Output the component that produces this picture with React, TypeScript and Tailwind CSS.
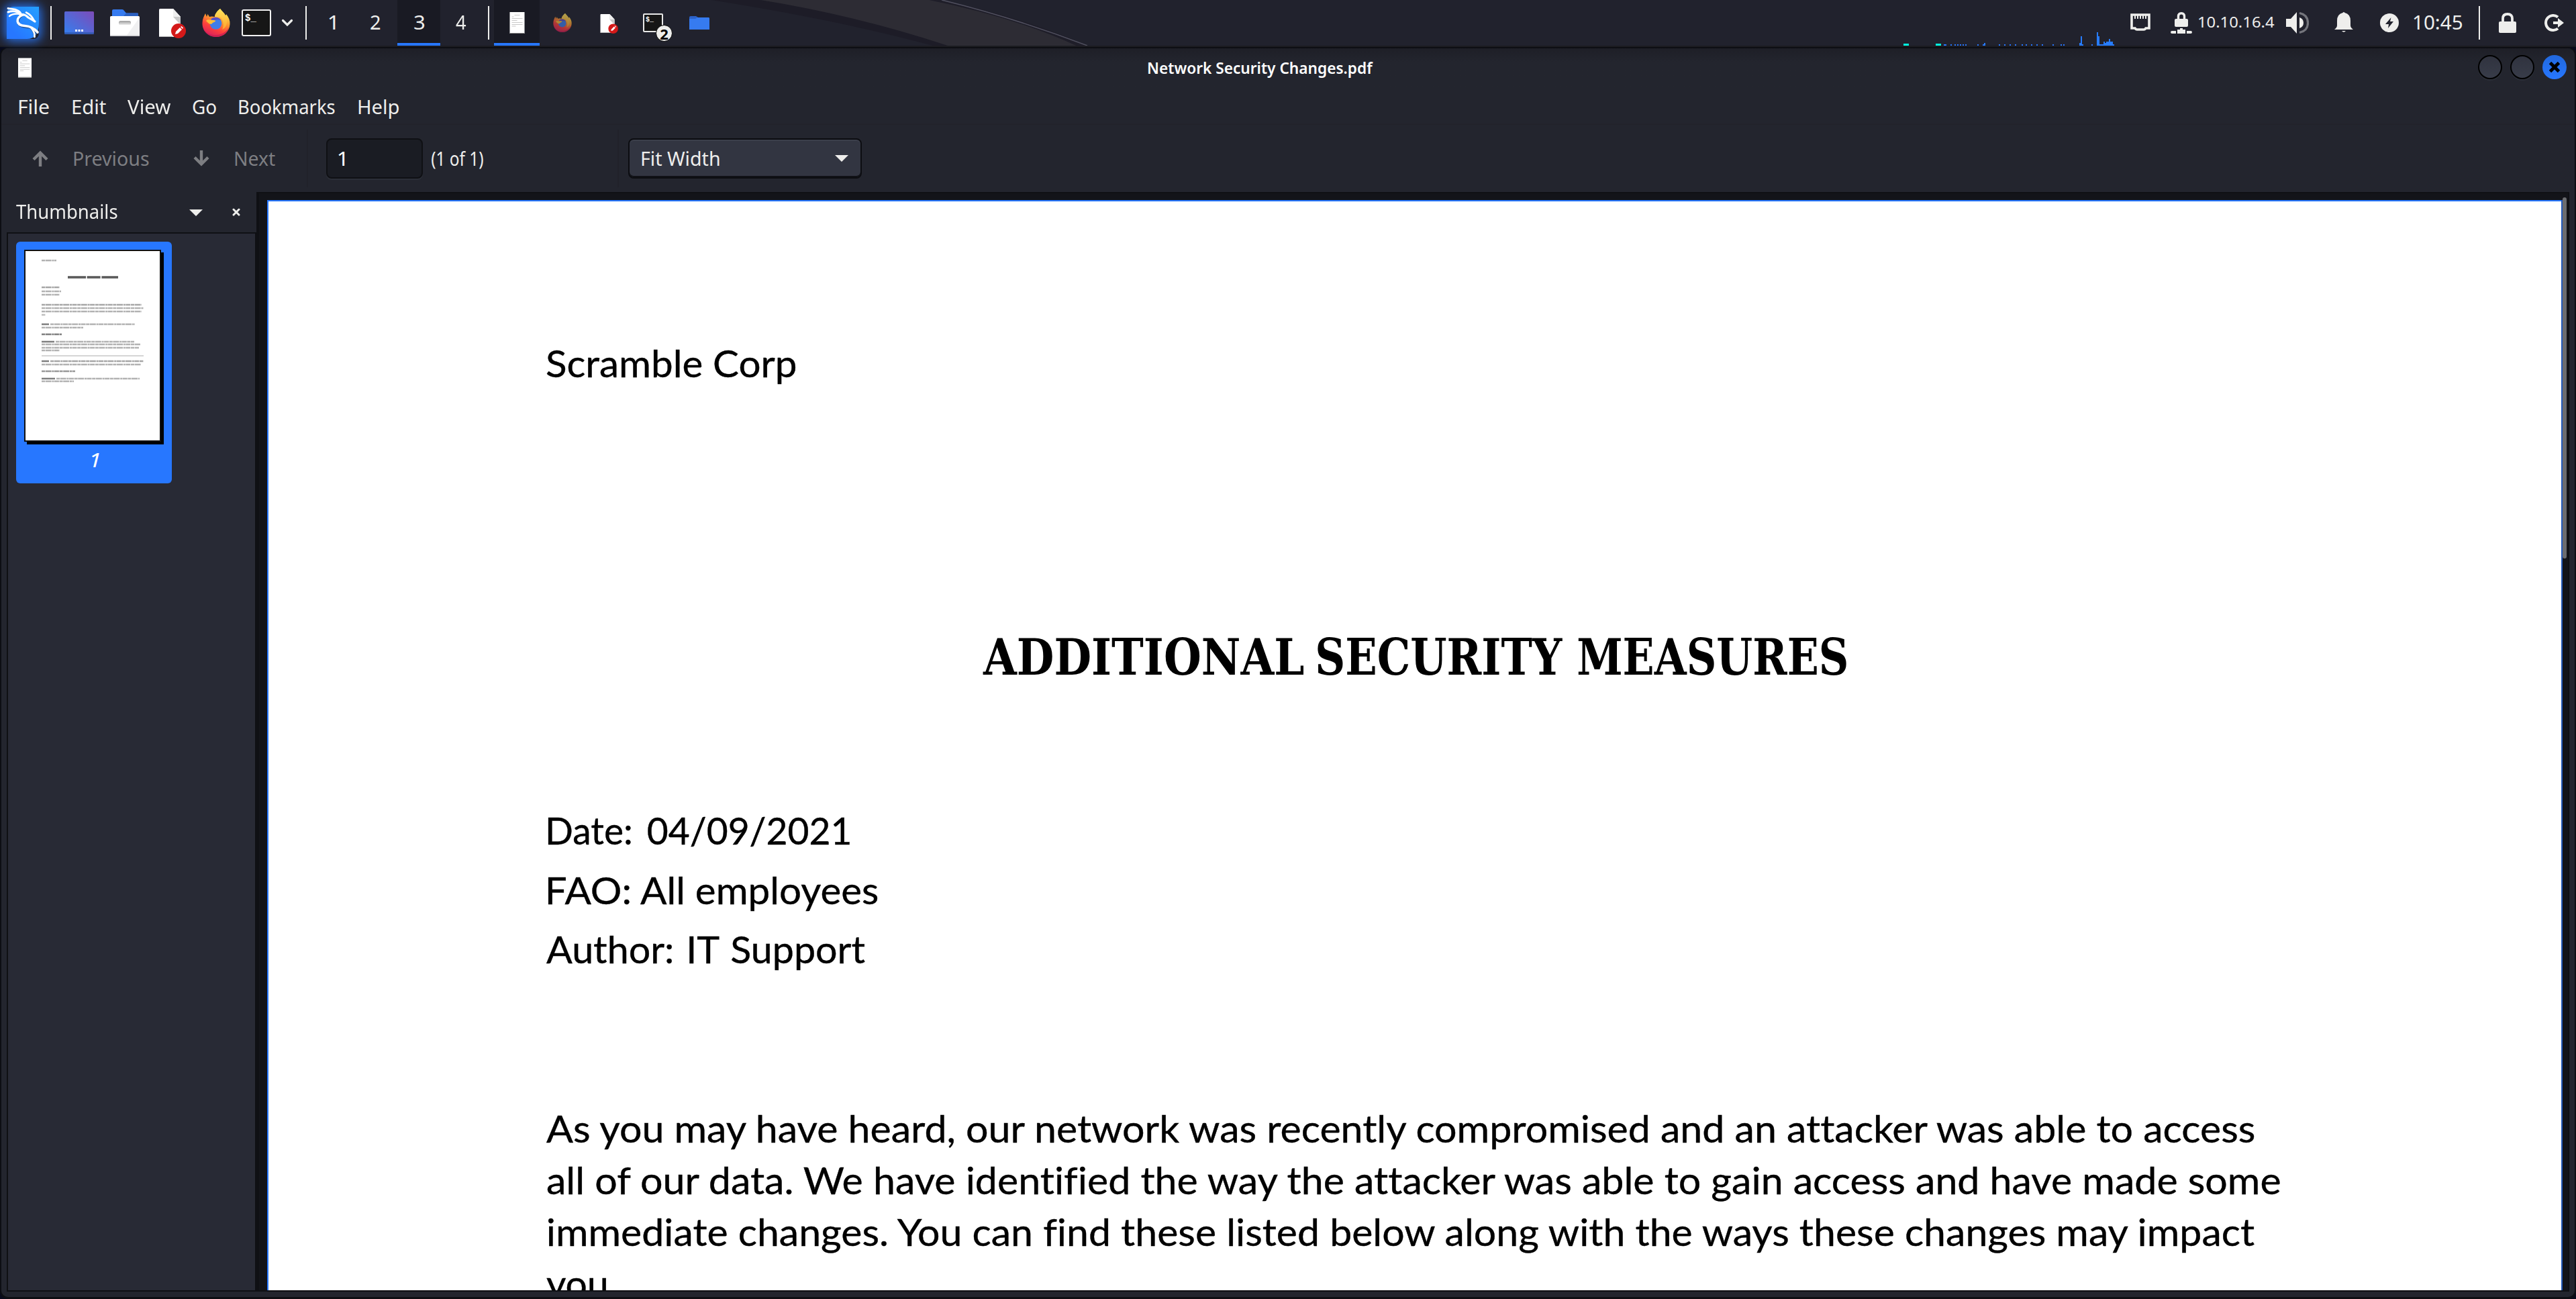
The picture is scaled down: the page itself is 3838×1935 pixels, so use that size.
import { useLayoutEffect, useRef } from "react";
import type { ReactNode } from "react";

/* One line of text whose ink is stretched to fill the width given by its class. */
function Fit({ children, className = "" }: { children: string; className?: string }) {
  const box = useRef<HTMLSpanElement>(null);
  const ink = useRef<HTMLSpanElement>(null);
  useLayoutEffect(() => {
    const outer = box.current!;
    const inner = ink.current!;
    const fit = () => {
      const cs = getComputedStyle(inner);
      const ctx = document.createElement("canvas").getContext("2d")!;
      ctx.font = `${cs.fontStyle} ${cs.fontWeight} ${cs.fontSize} ${cs.fontFamily}`;
      const m = ctx.measureText(children);
      const advance = parseFloat(cs.width);
      const natural = advance + m.actualBoundingBoxLeft + m.actualBoundingBoxRight - m.width;
      const w = outer.getBoundingClientRect().width;
      if (!(natural > 0) || !w) return;
      const s = w / natural;
      inner.style.transform = `translateX(${m.actualBoundingBoxLeft * s}px) scaleX(${s})`;
    };
    fit();
    const ro = new ResizeObserver(fit);
    ro.observe(outer);
    ro.observe(inner);
    return () => ro.disconnect();
  }, [children]);
  return (
    <span ref={box} className={`block shrink-0 ${className}`}>
      <span ref={ink} className="block w-max origin-left whitespace-nowrap">
        {children}
      </span>
    </span>
  );
}

function KaliIcon() {
  return (
    <svg viewBox="0 0 48 48" className="size-12 overflow-visible">
      <defs>
        <linearGradient id="kali" x1="0" y1="1" x2="1" y2="0">
          <stop offset="0.2" stopColor="#2777ff" />
          <stop offset="1" stopColor="#249fff" />
        </linearGradient>
      </defs>
      <path d="M10 0H48V24Q48 48 30 48H0V12Q0 0 10 0Z" fill="url(#kali)" />
      <g stroke="#1c2b4d" strokeWidth="4" fill="none" opacity="0.55" transform="translate(1 1)">
        <path d="M22 12C13 17 13 28 27 29C36 29 41 32 46 39M36 31C40 36 42 40 41 46" />
      </g>
      <g stroke="#fff" strokeLinecap="round" strokeLinejoin="round" fill="none">
        <path d="M2 2.5C8 3 17 3.500 21 10" strokeWidth="2.800" />
        <path d="M2 8C8 5.500 16 6.500 21 11" strokeWidth="3" />
        <path d="M4 14C9 10 15 10 21 11" strokeWidth="2.400" />
        <path d="M24 12C13 16 13 28 27 28.500C36 29 41 32 46 38" strokeWidth="3.600" />
        <path d="M36 31C40 36 42 39 41.500 45" strokeWidth="2.600" />
        <path d="M20 12C26 10.500 29 13 32 16C35 18 38 19 42 22" strokeWidth="3.200" />
        <path d="M29 8.500C34 11 38 15 41 21" strokeWidth="2.600" />
      </g>
    </svg>
  );
}

function DesktopIcon() {
  return (
    <svg viewBox="0 0 44 34" className="h-[34px] w-11">
      <defs>
        <linearGradient id="desk" x1="0" y1="1" x2="1" y2="0">
          <stop offset="0.1" stopColor="#3a7bea" />
          <stop offset="1" stopColor="#7d4bb8" />
        </linearGradient>
      </defs>
      <rect width="44" height="34" rx="1.500" fill="url(#desk)" />
      <path d="M0 32.500H44" stroke="#2d54a8" strokeWidth="2" />
      <path d="M16 27h3v3h-3zM20.500 27h3v3h-3zM25 27h3v3h-3z" fill="#fff" />
    </svg>
  );
}

function FilesIcon() {
  return (
    <svg viewBox="0 0 44 40" className="h-10 w-11">
      <path d="M3 12V2Q3 0 5 0H18Q20 0 21 2L24 5.500H41Q42 5.500 42 7V12Z" fill="#367bf0" />
      <path d="M24 5.500L20 10H42V7Q42 5.500 41 5.500Z" fill="#2a5fc0" />
      <rect y="10" width="44" height="30" rx="1.500" fill="#fff" />
      <path d="M44 12V39Q44 40 42 40H24Z" fill="#f0f0f1" />
      <path d="M0 39.300H44" stroke="#c9c9cc" strokeWidth="1.400" />
      <rect x="13" y="17" width="18" height="5" rx="2.500" fill="#a9a9a9" />
      <rect x="13" y="19.500" width="18" height="3" rx="1.500" fill="#cfcfcf" />
    </svg>
  );
}

function EditorIcon({ className }: { className: string }) {
  return (
    <svg viewBox="0 0 41 44" className={className}>
      <path d="M1.500 0H21L32 12V42H0V1.500Q0 0 1.500 0Z" fill="#fff" />
      <path d="M21 0L32 12V24L21 12Z" fill="#c9c9c9" />
      <path d="M21 0L32 12H21Z" fill="#efefef" />
      <path d="M0 41.500H20" stroke="#bbb" />
      <circle cx="29" cy="33" r="11" fill="#d41919" />
      <path d="M24 38L25 34L31 28L34 31L28 37Z" fill="#fff" />
      <path d="M32 27L33.500 26L36 28.500L35 30Z" fill="#fff" />
    </svg>
  );
}

function FirefoxIcon({ className }: { className: string }) {
  return (
    <svg viewBox="0 0 42 42" className={className}>
      <defs>
        <linearGradient id="ff1" x1="0.8" y1="0.05" x2="0.35" y2="1">
          <stop offset="0.1" stopColor="#ffdf4f" />
          <stop offset="0.4" stopColor="#ff9a2e" />
          <stop offset="0.7" stopColor="#ff3f3c" />
          <stop offset="1" stopColor="#d8215e" />
        </linearGradient>
        <linearGradient id="ff2" x1="0.5" y1="0" x2="0.5" y2="1">
          <stop offset="0" stopColor="#ffe45c" />
          <stop offset="1" stopColor="#ffa32c" />
        </linearGradient>
      </defs>
      <path d="M27 0C30 4 33 6 35 10C36 9 36 8.500 36 8C40 13 42 18 41.500 23C41 34 32 42 21 42C9 42 0 33 .5 21C.7 15 3 11 5 7L7 12L8.500 8L11 12C14 11 16 11.500 19 12C19 8 23 3 27 0Z" fill="url(#ff1)" />
      <path d="M3 31C8 39 16 39.500 22 39C32 38.500 38 32 40 27C38 36 31 42 21 42C12 42 6 37 3 31Z" fill="#c81e52" opacity="0.75" />
      <path d="M27 0C30 4 33 6 35 11C39 18 37 29 30 31C33 26 32 18 28 13C23 12 20 12 19 12C19 8 23 3 27 0Z" fill="url(#ff2)" />
      <circle cx="20.500" cy="22" r="8.800" fill="#3f7de8" />
      <path d="M13 16C17 11 26 12 29 18C24 15 21 17 19 17Z" fill="#5a4fc4" />
      <path d="M6 18C9 15 12 17 15 17C17 17 20 17 20 18C20 20 16 20 15 22C14 23.500 11 23 9 21Z" fill="#ffbd38" />
    </svg>
  );
}

function TerminalIcon({ small = false }: { small?: boolean }) {
  return small ? (
    <span className="flex h-7 w-[30px] rounded-xs border-2 border-[#e8e8e8] bg-[#161616] pl-0.5 font-['Liberation_Mono'] text-[10px] leading-[16px] font-bold text-white">
      $_
    </span>
  ) : (
    <span className="flex h-10 w-11 rounded-[3px] border-2 border-[#f2f2f2] bg-[#161616] pl-[3px] font-['Liberation_Mono'] text-[14px] leading-[22px] font-bold text-white">
      $_
    </span>
  );
}

function DocIcon({ className }: { className: string }) {
  return (
    <svg viewBox="0 0 22 32" className={className}>
      <rect width="22" height="32" fill="#fff" />
      <path d="M0 31.500H22" stroke="#8d8d8d" />
      <path
        d="M7 4.500h8M3 7h3M3 9.500h16M3 12.500h8M3 15.500h16M3 18.500h16M3 21h6"
        stroke="#c9c9c9"
        strokeWidth="1"
      />
    </svg>
  );
}

function Wallpaper() {
  return (
    <svg viewBox="0 0 660 68" className="absolute top-0 left-[1000px] h-[68px] w-[660px]">
      <path d="M60 0Q250 30 390 68H420Q280 18 130 0Z" fill="#1d1c27" />
      <path d="M134 0Q280 24 412 68H604Q510 25 385 0Z" fill="#2d2c34" />
      <path d="M385 0Q510 25 604 68H620Q520 24 400 0Z" fill="#1f1e29" />
      <path d="M403 0Q510 26 620 68" stroke="#50505f" strokeWidth="1.500" fill="none" />
    </svg>
  );
}

const dots = [
  2896, 2898, 2906, 2912, 2916, 2920, 2924, 2928, 2946, 2954, 2978, 2986, 2994, 3002, 3012, 3018, 3026, 3034, 3042,
  3058, 3070, 3074, 3116,
];
const bars = [
  [2956, 4], [3098, 4], [3100, 14], [3102, 2], [3124, 20], [3126, 14], [3128, 2], [3130, 2], [3132, 2],
  [3134, 6], [3136, 4], [3138, 6], [3140, 6], [3142, 10], [3144, 6], [3146, 6], [3148, 2],
];

function NetGraph() {
  return (
    <svg viewBox="2830 0 330 68" className="h-[68px] w-[330px]" shapeRendering="crispEdges">
      <path d="M2836 65h8v3h-8zM2884 65h8v3h-8z" fill="#00ffe0" />
      {dots.map((x) => (
        <rect key={x} x={x} y="66" width="2" height="2" fill="#2777ff" />
      ))}
      {bars.map(([x, h]) => (
        <rect key={x} x={x} y={68 - h} width="2" height={h} fill="#277cff" />
      ))}
    </svg>
  );
}

function Sep({ className }: { className: string }) {
  return <span className={`h-[50px] w-0.5 shrink-0 bg-[#eeeeec] ${className}`} />;
}

function Taskbar() {
  return (
    <header className="relative flex h-[68px] shrink-0 items-center bg-[#21222d] text-[29px] leading-[34px] text-[#eeeeec]">
      <Wallpaper />
      <div className="flex h-full items-center pl-2.5">
        <span className="size-12 rounded-lg shadow-[0_0_14px_4px_#2769d8]">
          <KaliIcon />
        </span>
        <Sep className="ml-[17px]" />
        <span className="ml-[19px]"><DesktopIcon /></span>
        <span className="ml-6"><FilesIcon /></span>
        <span className="mt-0.5 ml-[29px]"><EditorIcon className="h-11 w-[41px]" /></span>
        <span className="ml-[23px]"><FirefoxIcon className="size-[42px]" /></span>
        <span className="ml-[17px]"><TerminalIcon /></span>
        <svg viewBox="0 0 16 10" className="ml-4 h-2.5 w-4 overflow-visible">
          <path d="M1.500 1.500L8 8L14.500 1.500" fill="none" stroke="#eeeeec" strokeWidth="3.200" strokeLinecap="round" />
        </svg>
        <Sep className="ml-[19px]" />
        <Fit className="mb-0.5 ml-[33px] w-[10px]">1</Fit>
        <Fit className="mb-0.5 ml-[52px] w-[15px]">2</Fit>
        <span className="ml-[25px] flex h-full w-16 items-center justify-center border-b-4 border-[#2777ff] bg-[#191a23]">
          <Fit className="mt-0.5 w-[15px]">3</Fit>
        </span>
        <Fit className="mb-0.5 ml-[23px] w-[16px]">4</Fit>
        <Sep className="ml-8" />
        <span className="ml-[7px] flex h-full w-[68px] items-center justify-center border-b-4 border-[#2777ff] bg-[#191a23]">
          <DocIcon className="mt-1 h-8 w-[23px]" />
        </span>
        <span className="ml-5 opacity-65"><FirefoxIcon className="size-7" /></span>
        <span className="mt-0.5 ml-[42px]"><EditorIcon className="h-[29px] w-[28px]" /></span>
        <span className="relative ml-9">
          <TerminalIcon small />
          <span className="absolute top-[17px] left-[19px] flex size-[25px] items-center justify-center rounded-full border border-black bg-[#eeeeec] text-[22px] leading-none font-bold text-black">
            2
          </span>
        </span>
        <svg viewBox="0 0 30 20" className="ml-[39px] h-5 w-[30px]">
          <path d="M0 2Q0 0 2 0H10L13 2H28V6H0Z" fill="#2b62c9" />
          <path d="M0 4H9L12 2H29Q30 2 30 3.500V20H0Z" fill="#367bf0" />
        </svg>
      </div>
      <div className="ml-auto flex h-full items-center pr-[18px]">
        <NetGraph />
        <svg viewBox="0 0 30 26" className="mb-0.5 ml-[14px] h-[26px] w-[30px]">
          <path d="M2 2H28V22H23Q22 24 20 24H10Q8 24 7 22H2Z" fill="none" stroke="#eeeeec" strokeWidth="3.600" />
          <path d="M7 3v5M11 3v5M15 3v5M19 3v5M23 3v5" stroke="#eeeeec" strokeWidth="2" />
        </svg>
        <svg viewBox="0 0 32 32" className="ml-[30px] h-8 w-8">
          <path d="M11.500 12V6.500Q11.500 1.700 16 1.700T20.500 6.500V12" fill="none" stroke="#eeeeec" strokeWidth="3.400" />
          <rect x="6" y="10" width="20" height="12" rx="2" fill="#eeeeec" />
          <path d="M14 24h4v2h4v6H10v-6h4zM2 28h6v4H2Q0 32 0 30T2 28zM24 28h6q2 0 2 2t-2 2h-6z" fill="#eeeeec" />
        </svg>
        <Fit className="mb-1 ml-[9px] w-[114px] text-[22px]">10.10.16.4</Fit>
        <svg viewBox="0 0 34 32" className="ml-[17px] h-8 w-[34px]">
          <path d="M0 10H7L16 0V32L7 22H0ZM20 8Q26 10 26 16T20 24Z" fill="#eeeeec" />
          <path d="M20 1.500Q32.500 4 32.500 16T20 30.500" fill="none" stroke="#74757c" strokeWidth="3.200" />
        </svg>
        <svg viewBox="0 0 28 30" className="mb-0.5 ml-[38px] h-[30px] w-7">
          <path d="M12.500 1Q14-1 15.500 1Q24 3 24 13V20Q24 23 28 26H0Q4 23 4 20V13Q4 3 12.500 1ZM11 28H17Q14 31.500 11 28Z" fill="#eeeeec" />
        </svg>
        <svg viewBox="0 0 28 28" className="ml-10 size-7">
          <circle cx="14" cy="14" r="14" fill="#eeeeec" />
          <path d="M16.500 6L8 16H13L12 22L20 12H15Z" fill="#21222d" />
        </svg>
        <Fit className="mb-0.5 ml-[22px] w-[72px]">10:45</Fit>
        <Sep className="ml-[25px]" />
        <svg viewBox="0 0 26 30" className="ml-7 h-[30px] w-[26px]">
          <path d="M6 14V8.500Q6 2 13 2T20 8.500V14" fill="none" stroke="#eeeeec" strokeWidth="3.800" />
          <rect y="13" width="26" height="17" rx="2" fill="#eeeeec" />
        </svg>
        <svg viewBox="0 0 29 26" className="ml-[42px] h-[26px] w-[29px]">
          <path d="M20 4.500A11 11 0 1 0 20 21.500" fill="none" stroke="#eeeeec" strokeWidth="4" />
          <path d="M13 11H20V6L29 13L20 20V15H13Z" fill="#eeeeec" />
        </svg>
      </div>
    </header>
  );
}

function WinButton() {
  return (
    <span className="size-9 rounded-full border-2 border-black bg-linear-to-b from-[#30333f] to-[#383c49] shadow-[0_2px_0_#2b2e38]" />
  );
}

function TitleBar() {
  return (
    <div className="flex h-[60px] shrink-0 items-center bg-linear-to-b from-[#1e1f27] to-[#23252e] to-35% pr-3 pl-[25px]">
      <DocIcon className="mb-0.5 h-8 w-5" />
      <Fit className="mb-0.5 ml-[1664px] w-[335px] text-[23px] font-semibold text-white">Network Security Changes.pdf</Fit>
      <div className="mb-1 ml-auto flex gap-3">
        <WinButton />
        <WinButton />
        <span className="flex size-9 items-center justify-center rounded-full bg-linear-to-b from-[#2168dd] to-[#2777ff]">
          <svg viewBox="0 0 16 16" className="size-4">
            <path d="M1.500 1.500L14.500 14.500M14.500 1.500L1.500 14.500" stroke="#000" strokeWidth="4.800" />
          </svg>
        </span>
      </div>
    </div>
  );
}

function MenuBar() {
  return (
    <nav className="flex h-[54px] shrink-0 items-center border-b-2 border-[#22232b] pt-0.5 pl-[26px] text-[#eeeeec]">
      <Fit className="w-[45px]">File</Fit>
      <Fit className="ml-[35px] w-[50px]">Edit</Fit>
      <Fit className="ml-8 w-[65px]">View</Fit>
      <Fit className="ml-8 w-[35px]">Go</Fit>
      <Fit className="ml-[34px] w-[143px]">Bookmarks</Fit>
      <Fit className="ml-[35px] w-[60px]">Help</Fit>
    </nav>
  );
}

function Arrow({ className }: { className: string }) {
  return (
    <svg viewBox="0 0 24 24" className={`size-6 shrink-0 ${className}`}>
      <path d="M12 24V4M2 13.500L12 3.500L22 13.500" fill="none" stroke="#7d7e82" strokeWidth="4.400" />
    </svg>
  );
}

function Toolbar() {
  return (
    <div className="flex h-[100px] shrink-0 items-center pl-[46px] text-[#7d7e82]">
      <Arrow className="" />
      <Fit className="ml-[38px] w-[112px]">Previous</Fit>
      <Arrow className="ml-[66px] rotate-180" />
      <Fit className="ml-[38px] w-[60px]">Next</Fit>
      <span className="ml-[47px] h-[86px] w-0.5 bg-[#21222a]" />
      <span className="ml-[27px] flex h-[60px] w-36 items-center rounded-lg border-2 border-[#0f1014] bg-[#1a1c23] pl-4 text-white shadow-[0_2px_0_#2c2f38]">
        <Fit className="w-[10px]">1</Fit>
      </span>
      <Fit className="ml-[13px] w-[77px] text-[#eeeeec]">(1 of 1)</Fit>
      <span className="ml-[200px] h-[86px] w-0.5 bg-[#21222a]" />
      <span className="ml-[14px] flex h-[60px] w-[348px] items-center rounded-lg border-2 border-[#0c0d11] bg-[#323541] pr-[18px] pl-[18px] text-[#eeeeec] shadow-[inset_0_2px_0_#3b3f4b,inset_0_-2px_0_#101116]">
        <Fit className="w-[116px]">Fit Width</Fit>
        <svg viewBox="0 0 20 10" className="ml-auto h-2.5 w-5">
          <path d="M0 0H20L10 10Z" fill="#eeeeec" />
        </svg>
      </span>
    </div>
  );
}

/* Miniature text rows of the page: [y, x1, x2, opacity] */
const rows: [number, number, number, number][] = [
  [15, 24, 46, 0.3], [55, 24, 51, 0.35], [61, 24, 53, 0.3], [66, 24, 51, 0.3],
  [81, 24, 173, 0.35], [86, 24, 176, 0.3], [91, 24, 173, 0.3], [96, 24, 30, 0.25],
  [110, 37, 163, 0.3], [115, 24, 86, 0.3], [125, 24, 54, 0.5],
  [136, 45, 162, 0.3], [140, 24, 171, 0.3], [145, 24, 169, 0.3], [149, 24, 51, 0.3],
  [165, 37, 176, 0.35], [170, 24, 172, 0.3], [180, 24, 74, 0.4],
  [191, 46, 170, 0.3], [195, 24, 72, 0.3],
];

function PageThumbnail() {
  return (
    <svg viewBox="0 0 208 290" className="h-[290px] w-[208px]">
      <path d="M4 4H208V290H4Z" fill="#000" />
      <rect x="1" y="1" width="202" height="284" fill="#fff" stroke="#111" strokeWidth="2" />
      <g transform="translate(2 1)" className="blur-[0.6px]">
        {rows.map(([y, a, b, o]) => (
          <path key={y} d={`M${a} ${y}H${b}`} stroke="#000" strokeOpacity={o} strokeWidth="2.400" strokeDasharray="5 0.600 9 0.800 3 0.500 7 0.700" />
        ))}
        <path d="M63 40H138" stroke="#000" strokeOpacity="0.65" strokeWidth="3.400" strokeDasharray="27 1.600 20 1.800" />
        <path d="M24 110H35M24 136H43M24 165H35M24 191H44" stroke="#000" strokeOpacity="0.5" strokeWidth="2.600" />
        <path d="M24 157H176" stroke="#000" strokeOpacity="0.22" strokeWidth="1.400" />
      </g>
    </svg>
  );
}

function Sidebar() {
  return (
    <aside className="flex w-[372px] shrink-0 flex-col">
      <div className="flex h-[60px] shrink-0 items-center pr-6 pb-1 pl-[14px] text-[#eeeeec]">
        <Fit className="mt-0.5 w-[151px]">Thumbnails</Fit>
        <svg viewBox="0 0 20 10" className="mt-1.5 ml-[107px] h-2.5 w-5">
          <path d="M0 0H20L10 10Z" fill="#eeeeec" />
        </svg>
        <svg viewBox="0 0 12 12" className="mt-1 ml-auto size-3">
          <path d="M2 2L10 10M10 2L2 10" stroke="#eeeeec" strokeWidth="3" strokeLinecap="round" />
        </svg>
      </div>
      <div className="flex-1 border-2 border-[#0f1014] bg-[#282a35] p-3">
        <div className="flex h-[360px] w-[232px] flex-col rounded-md bg-[#2777ff] px-3 pt-3 text-white">
          <PageThumbnail />
          <div className="mt-[6px] flex pl-[101px] italic">
            <Fit className="w-[11px]">1</Fit>
          </div>
        </div>
      </div>
    </aside>
  );
}

function Page({ children }: { children: ReactNode }) {
  return (
    <main className="flex min-w-0 flex-1 border-y-2 border-r-2 border-l-4 border-[#0f1014] bg-[#131419] pr-0.5 pl-3">
      <div className="mt-[10px] min-w-0 flex-1 overflow-hidden border-t-2 border-l-2 border-[#2777ff] bg-white">{children}</div>
      <div className="mt-[10px] w-0.5 bg-[#2359b8]" />
      <div className="mt-1.5 h-[538px] w-1.5 rounded-t-full rounded-b-full bg-[#6c6d70]" />
    </main>
  );
}

function Document() {
  return (
    <article className="h-full pl-[414px] font-['Lato',sans-serif] text-[56px] leading-[77px] text-black [font-variant-ligatures:none] [-webkit-text-stroke:0.4px_black]">
      <Fit className="mt-[202px] w-[371px]">Scramble Corp</Fit>
      <h1 className="mt-[360px] ml-[650px] flex font-['DejaVu_Serif_Condensed','DejaVu_Serif',serif] text-[75px] leading-[80px] font-bold [-webkit-text-stroke:0]">
        <Fit className="w-[478px]">ADDITIONAL</Fit>
        <Fit className="ml-[21px] w-[365px]">SECURITY</Fit>
        <Fit className="ml-[23px] w-[400px]">MEASURES</Fit>
      </h1>
      <div className="mt-[174px] leading-[88.500px]">
        <Fit className="ml-[3px] w-[449px] [word-spacing:7px]">Date: 04/09/2021</Fit>
        <Fit className="ml-[3px] w-[491px]">FAO: All employees</Fit>
        <Fit className="w-[475px] [word-spacing:3px]">Author: IT Support</Fit>
      </div>
      <div className="mt-[183px]">
        <Fit className="w-[2545px]">As you may have heard, our network was recently compromised and an attacker was able to access</Fit>
        <Fit className="ml-px w-[2582px]">all of our data. We have identified the way the attacker was able to gain access and have made some</Fit>
        <Fit className="ml-[3px] w-[2542px]">immediate changes. You can find these listed below along with the ways these changes may impact</Fit>
        <Fit className="w-[104px]">you.</Fit>
      </div>
    </article>
  );
}

export default function App() {
  return (
    <div className="flex h-[1935px] w-[3838px] flex-col overflow-hidden bg-[#080a1c] font-['Noto_Sans',sans-serif] text-[28.500px] leading-[34px]">
      <Taskbar />
      <div className="h-0.5 shrink-0 bg-[#1c1c21]" />
      <div className="flex h-[1865px] flex-col overflow-hidden rounded-xl border-x-2 border-t-2 border-b-[3px] border-[#0d0e13] bg-[#23252e]">
        <TitleBar />
        <MenuBar />
        <Toolbar />
        <div className="flex h-[1638px] shrink-0 pr-2 pl-2">
          <Sidebar />
          <Page>
            <Document />
          </Page>
        </div>
      </div>
    </div>
  );
}
